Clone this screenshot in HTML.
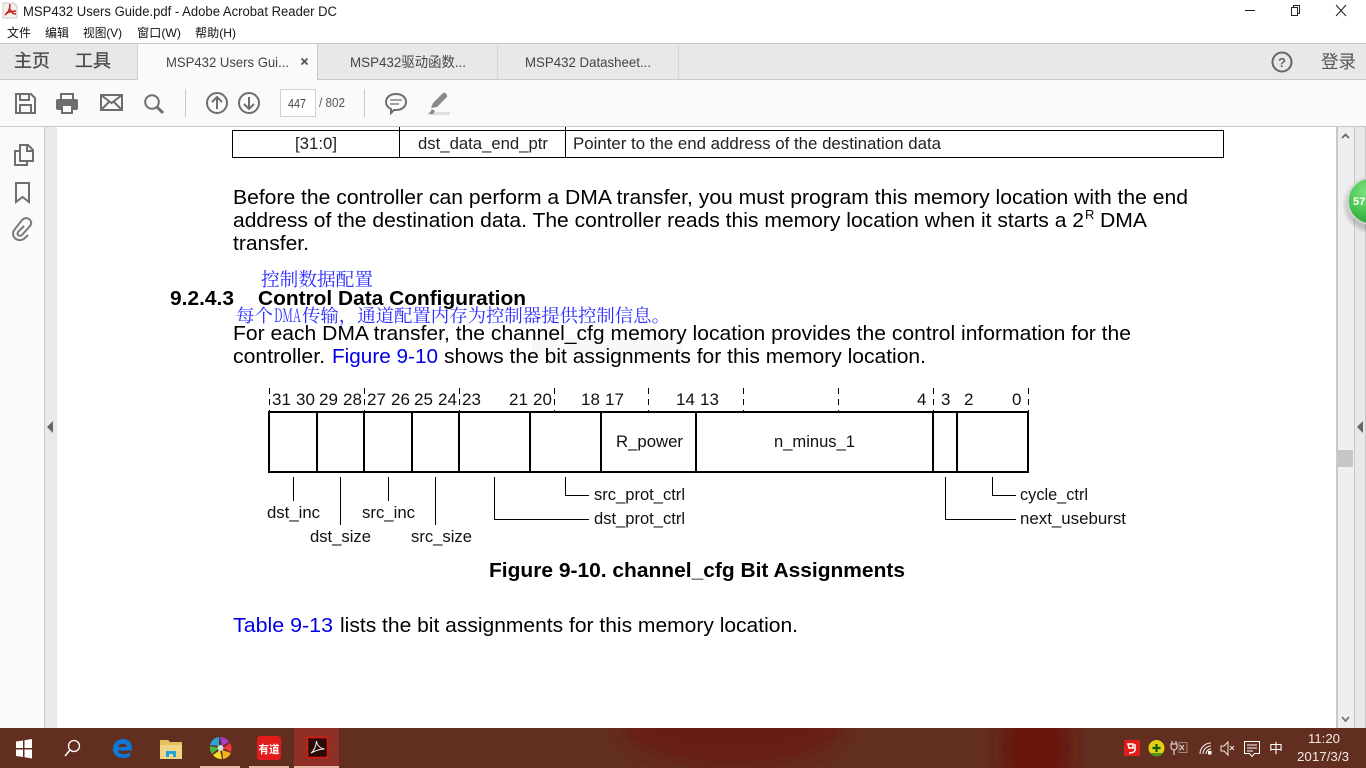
<!DOCTYPE html>
<html lang="zh"><head><meta charset="utf-8"><title>MSP432 Users Guide.pdf - Adobe Acrobat Reader DC</title>
<style>
html,body{margin:0;padding:0;width:1366px;height:768px;overflow:hidden;background:#fff}
svg{display:block}
text{font-family:"Liberation Sans","Noto Sans CJK SC",sans-serif;white-space:pre}
.p{font-size:20.6px;fill:#000}
.l{fill:#0000e6}
.n{font-size:17px;fill:#111}
.d{font-size:16.8px;fill:#111}
.cn{font-family:"Noto Serif CJK SC",serif;fill:#2c2cff}
.ui{fill:#444}
.ic{fill:none;stroke:#6e6e6e;stroke-width:2}
.tb{fill:#f3e9e5}
</style></head><body>
<svg width="1366" height="768" viewBox="0 0 1366 768" xmlns="http://www.w3.org/2000/svg">
<defs><filter id="b" x="-50%" y="-50%" width="200%" height="200%"><feGaussianBlur stdDeviation="9"/></filter>
<radialGradient id="ball" cx="40%" cy="30%" r="75%"><stop offset="0" stop-color="#7fe07f"/><stop offset=".6" stop-color="#45c44f"/><stop offset="1" stop-color="#2c9a38"/></radialGradient>
<radialGradient id="sh" cx="50%" cy="50%" r="50%"><stop offset=".8" stop-color="#000" stop-opacity=".18"/><stop offset="1" stop-color="#000" stop-opacity="0"/></radialGradient>
<clipPath id="tc"><rect x="0" y="728" width="1366" height="40"/></clipPath></defs>

<!-- title bar -->
<rect width="1366" height="43" fill="#fff"/>
<path d="M3 3h11l3 3v12H3z" fill="#f1f1f1" stroke="#ccc"/>
<path d="M5 15c3-2 5-6 5-11M10 9c1 3 3 5 6 5M6 13c3-1 6-2 10-2" fill="none" stroke="#c8201c" stroke-width="1.5"/>
<text x="23" y="16" font-size="13.500" fill="#1a1a1a" textLength="314" lengthAdjust="spacingAndGlyphs">MSP432 Users Guide.pdf - Adobe Acrobat Reader DC</text>
<text x="7" y="37" font-size="12" fill="#111" textLength="24" lengthAdjust="spacingAndGlyphs">文件</text>
<text x="45" y="37" font-size="12" fill="#111" textLength="24" lengthAdjust="spacingAndGlyphs">编辑</text>
<text x="83" y="37" font-size="12" fill="#111" textLength="39" lengthAdjust="spacingAndGlyphs">视图(V)</text>
<text x="137" y="37" font-size="12" fill="#111" textLength="44" lengthAdjust="spacingAndGlyphs">窗口(W)</text>
<text x="195" y="37" font-size="12" fill="#111" textLength="41" lengthAdjust="spacingAndGlyphs">帮助(H)</text>
<path d="M1245 10.500h10" stroke="#222" stroke-width="1"/>
<path d="M1291.500 7.500h6v8h-6zM1293.500 7V5.500h6v8H1298" fill="none" stroke="#222" stroke-width="1"/>
<path d="M1336 5l10 11M1346 5l-10 11" fill="none" stroke="#222" stroke-width="1"/>

<!-- tab bar -->
<rect y="43" width="1366" height="37" fill="#e8e8e8"/>
<rect y="43" width="1366" height="1" fill="#c9c9c9"/>
<rect y="79" width="1366" height="1" fill="#c9c9c9"/>
<rect x="138" y="44" width="179" height="36" fill="#fafafa"/>
<rect x="137" y="44" width="1" height="36" fill="#d0d0d0"/>
<rect x="317" y="44" width="1" height="36" fill="#c9c9c9"/>
<rect x="497" y="44" width="1" height="35" fill="#d6d6d6"/>
<rect x="678" y="44" width="1" height="35" fill="#d6d6d6"/>
<text x="14" y="67" font-size="18" fill="#4a4a4a" stroke="#4a4a4a" stroke-width=".3" textLength="36" lengthAdjust="spacingAndGlyphs">主页</text>
<text x="75" y="67" font-size="18" fill="#4a4a4a" stroke="#4a4a4a" stroke-width=".3" textLength="36" lengthAdjust="spacingAndGlyphs">工具</text>
<text x="166" y="67" font-size="14" class="ui" textLength="123" lengthAdjust="spacingAndGlyphs">MSP432 Users Gui...</text>
<path d="M301.500 58.500l6 6M307.500 58.500l-6 6" stroke="#555" stroke-width="1.800"/>
<text x="350" y="67" font-size="14" class="ui" textLength="116" lengthAdjust="spacingAndGlyphs">MSP432驱动函数...</text>
<text x="525" y="67" font-size="14" class="ui" textLength="126" lengthAdjust="spacingAndGlyphs">MSP432 Datasheet...</text>
<circle cx="1282" cy="62" r="9.500" fill="none" stroke="#666" stroke-width="2"/>
<text x="1282" y="67" font-size="13" font-weight="bold" fill="#666" text-anchor="middle">?</text>
<text x="1321" y="68" font-size="18" fill="#555" textLength="35" lengthAdjust="spacingAndGlyphs">登录</text>

<!-- toolbar -->
<rect y="80" width="1366" height="46" fill="#fafafa"/>
<rect y="126" width="1366" height="1" fill="#c9c9c9"/>
<path d="M16 94h15l4 4v15H16z" class="ic"/><path d="M20 94v6h9v-6M20 112v-7h11v7" class="ic"/>
<path d="M61 100v-6h12v6" class="ic" stroke-width="2"/><rect x="56" y="99" width="22" height="11" rx="2" fill="#6e6e6e"/><rect x="62" y="105" width="10" height="8" fill="#fafafa" stroke="#6e6e6e" stroke-width="2"/>
<path d="M101 95h21v15h-21zM101 95l10.500 8 10.500-8M101 110l8-8M122 110l-8-8" class="ic"/>
<circle cx="152" cy="102" r="6.800" class="ic" stroke-width="2"/><path d="M157 107l6 6" stroke="#6e6e6e" stroke-width="3"/>
<rect x="185" y="89" width="1" height="28" fill="#c9c9c9"/>
<circle cx="217" cy="103" r="10" class="ic"/><path d="M217 109V97M212 102l5-5 5 5" class="ic"/>
<circle cx="249" cy="103" r="10" class="ic"/><path d="M249 97v12M244 104l5 5 5-5" class="ic"/>
<rect x="280.500" y="89.500" width="35" height="27" fill="#fff" stroke="#d0d0d0"/>
<text x="288" y="108" font-size="13" fill="#444" textLength="18" lengthAdjust="spacingAndGlyphs">447</text>
<text x="319" y="107" font-size="13" fill="#555" textLength="26" lengthAdjust="spacingAndGlyphs">/ 802</text>
<rect x="364" y="89" width="1" height="28" fill="#c9c9c9"/>
<path d="M396 94c6 0 10 3.500 10 8s-4 8-10 8h-2l-3 3v-4c-3-1.500-5-4-5-7 0-4.500 4-8 10-8z" class="ic"/><path d="M390 100h12M390 104h9" stroke="#6e6e6e" stroke-width="1.300"/>
<path d="M431 108l2-5 10-10c2-1 5 2 4 4l-10 10z" fill="#8a8a8a"/><rect x="428" y="112" width="22" height="3" fill="#dedede"/><path d="M429 114l3-5 3 2-2 3z" fill="#8a8a8a"/>

<!-- left panel -->
<rect x="0" y="127" width="44" height="601" fill="#fafafa"/>
<rect x="44" y="127" width="1" height="601" fill="#c9c9c9"/>
<rect x="45" y="127" width="12" height="601" fill="#e9e9e9"/>
<path d="M20 151h-5v14h12v-4" class="ic"/><path d="M20 145h8l5 5v11H20zM27 145v6h6" class="ic"/>
<path d="M16 183h13v19l-6.500-5-6.500 5z" class="ic"/>
<path d="M24 226l-6 6c-2 3 2 5 4 3l8-9c4-5-3-11-8-6l-7 9c-6 7 3 15 10 9l3-3" fill="none" stroke="#7a7a7a" stroke-width="2"/>
<path d="M47 427l6-6v12z" fill="#666"/>

<!-- page -->
<rect x="57" y="127" width="1279" height="601" fill="#fff"/>
<rect x="532" y="338" width="150" height="14" fill="#f8f8f8"/>

<!-- table -->
<g stroke="#000" stroke-width="1" fill="none">
<path d="M232.500 130.500H1223.500V157.500H232.500Z"/>
<path d="M399.500 127V158M565.500 127V158"/>
</g>
<text x="295" y="149" font-size="16.800" fill="#222" textLength="42" lengthAdjust="spacingAndGlyphs">[31:0]</text>
<text x="418" y="149" font-size="16.800" fill="#222" textLength="130" lengthAdjust="spacingAndGlyphs">dst_data_end_ptr</text>
<text x="573" y="149" font-size="16.800" fill="#222" textLength="368" lengthAdjust="spacingAndGlyphs">Pointer to the end address of the destination data</text>

<!-- body -->
<text class="p" x="233" y="204" textLength="955" lengthAdjust="spacingAndGlyphs">Before the controller can perform a DMA transfer, you must program this memory location with the end</text>
<text class="p" x="233" y="227" textLength="851" lengthAdjust="spacingAndGlyphs">address of the destination data. The controller reads this memory location when it starts a 2</text>
<text x="1085" y="219" font-size="13" fill="#000">R</text>
<text class="p" x="1100" y="227" textLength="47" lengthAdjust="spacingAndGlyphs">DMA</text>
<text class="p" x="233" y="250" textLength="76" lengthAdjust="spacingAndGlyphs">transfer.</text>
<text class="cn" x="261" y="286" font-size="18.600" textLength="112" lengthAdjust="spacingAndGlyphs">控制数据配置</text>
<text x="170" y="305" font-size="20.600" font-weight="bold" fill="#000" textLength="64" lengthAdjust="spacingAndGlyphs">9.2.4.3</text>
<text x="258" y="305" font-size="20.600" font-weight="bold" fill="#000" textLength="268" lengthAdjust="spacingAndGlyphs">Control Data Configuration</text>
<text class="cn" x="236" y="322" font-size="18.400" textLength="37" lengthAdjust="spacingAndGlyphs">每个</text>
<text class="cn" x="274" y="322" font-size="18.400" textLength="27" lengthAdjust="spacingAndGlyphs">DMA</text>
<text class="cn" x="302" y="322" font-size="18.400" textLength="368" lengthAdjust="spacingAndGlyphs">传输，通道配置内存为控制器提供控制信息。</text>
<text class="p" x="233" y="340" textLength="898" lengthAdjust="spacingAndGlyphs">For each DMA transfer, the channel_cfg memory location provides the control information for the</text>
<text class="p" x="233" y="363" textLength="92" lengthAdjust="spacingAndGlyphs">controller.</text>
<text class="p l" x="332" y="363" textLength="106" lengthAdjust="spacingAndGlyphs">Figure 9-10</text>
<text class="p" x="444" y="363" textLength="482" lengthAdjust="spacingAndGlyphs">shows the bit assignments for this memory location.</text>

<!-- diagram -->
<g fill="none" stroke="#000">
<path d="M269 412H1028V472H269Z" stroke-width="2"/>
<path d="M317 412V472M364 412V472M412 412V472M459 412V472M530 412V472M601 412V472M696 412V472M933 412V472M957 412V472" stroke-width="2"/>
<path d="M269.500 388V412M364.500 388V412M459.500 388V412M554.500 388V412M648.500 388V412M743.500 388V412M838.500 388V412M933.500 388V412M1028.500 388V412" stroke-width="1" stroke-dasharray="6 5"/>
<path d="M293.500 477V501M340.500 477V525M388.500 477V501M435.500 477V525M494.500 477V519.500H589M565.500 477V495.500H589M945.500 477V519.500H1016M992.500 477V495.500H1016" stroke-width="1"/>
</g>
<g class="n">
<text x="272" y="405" class="n">31</text><text x="296" y="405" class="n">30</text><text x="319" y="405" class="n">29</text><text x="343" y="405" class="n">28</text><text x="367" y="405" class="n">27</text><text x="391" y="405" class="n">26</text><text x="414" y="405" class="n">25</text><text x="438" y="405" class="n">24</text><text x="462" y="405" class="n">23</text><text x="509" y="405" class="n">21</text><text x="533" y="405" class="n">20</text><text x="581" y="405" class="n">18</text><text x="605" y="405" class="n">17</text><text x="676" y="405" class="n">14</text><text x="700" y="405" class="n">13</text><text x="917" y="405" class="n">4</text><text x="941" y="405" class="n">3</text><text x="964" y="405" class="n">2</text><text x="1012" y="405" class="n">0</text>
</g>
<text class="d" x="616" y="447" textLength="67" lengthAdjust="spacingAndGlyphs">R_power</text>
<text class="d" x="774" y="447" textLength="81" lengthAdjust="spacingAndGlyphs">n_minus_1</text>
<text class="d" x="594" y="500" textLength="91" lengthAdjust="spacingAndGlyphs">src_prot_ctrl</text>
<text class="d" x="594" y="524" textLength="91" lengthAdjust="spacingAndGlyphs">dst_prot_ctrl</text>
<text class="d" x="1020" y="500" textLength="68" lengthAdjust="spacingAndGlyphs">cycle_ctrl</text>
<text class="d" x="1020" y="524" textLength="106" lengthAdjust="spacingAndGlyphs">next_useburst</text>
<text class="d" x="267" y="518" textLength="53" lengthAdjust="spacingAndGlyphs">dst_inc</text>
<text class="d" x="362" y="518" textLength="53" lengthAdjust="spacingAndGlyphs">src_inc</text>
<text class="d" x="310" y="542" textLength="61" lengthAdjust="spacingAndGlyphs">dst_size</text>
<text class="d" x="411" y="542" textLength="61" lengthAdjust="spacingAndGlyphs">src_size</text>
<text x="489" y="577" font-size="20.600" font-weight="bold" fill="#000" textLength="416" lengthAdjust="spacingAndGlyphs">Figure 9-10. channel_cfg Bit Assignments</text>
<text class="p l" x="233" y="632" textLength="100" lengthAdjust="spacingAndGlyphs">Table 9-13</text>
<text class="p" x="340" y="632" textLength="458" lengthAdjust="spacingAndGlyphs">lists the bit assignments for this memory location.</text>

<!-- right scrollbar -->
<rect x="1336" y="127" width="2" height="601" fill="#c9c9c9"/>
<rect x="1338" y="127" width="16" height="601" fill="#efefef"/>
<rect x="1354" y="127" width="1" height="601" fill="#c9c9c9"/>
<rect x="1355" y="127" width="10" height="601" fill="#e8e8e8"/>
<rect x="1365" y="127" width="1" height="601" fill="#c9c9c9"/>
<path d="M1342 138l3.500-3.500 3.500 3.500" fill="none" stroke="#666" stroke-width="1.800"/>
<path d="M1342 717l3.500 4 3.500-4" fill="none" stroke="#777" stroke-width="1.800"/>
<rect x="1338" y="450" width="15" height="17" fill="#c6c6c6"/>
<path d="M1357 427l6-6v12z" fill="#666"/>
<circle cx="1371" cy="205" r="29" fill="url(#sh)"/>
<circle cx="1371" cy="201" r="23" fill="url(#ball)" stroke="#d8d8d8" stroke-width="1.500"/>
<text x="1353" y="205" font-size="11" font-weight="bold" fill="#fff">57</text>

<!-- taskbar -->
<rect y="728" width="1366" height="40" fill="#622e20"/>
<g clip-path="url(#tc)"><g filter="url(#b)">
<ellipse cx="732" cy="722" rx="112" ry="44" fill="#691b14"/>
<ellipse cx="1036" cy="748" rx="36" ry="50" fill="#68190d"/>
</g></g>
<rect x="294" y="728" width="45" height="40" fill="#8e3026"/>
<rect x="200" y="766" width="40" height="2" fill="#e9b8ab"/>
<rect x="249" y="766" width="40" height="2" fill="#e9b8ab"/>
<rect x="294" y="766" width="45" height="2" fill="#e9b8ab"/>
<path d="M16 742.500l7-1v7.500h-7zM24.500 741.300l7.500-1.300v9h-7.500zM16 750.500h7v7.500l-7-1zM24.500 750.500H32v9l-7.500-1.300z" fill="#fff" transform="translate(0,-1)"/>
<circle cx="74" cy="746" r="5.500" fill="none" stroke="#fff" stroke-width="1.300"/><path d="M70 750l-5 6" stroke="#fff" stroke-width="1.500"/>
<path d="M113 749c0-6 4-10 10-10 5.500 0 9 3.500 9 9.500v2h-14c.5 3.500 6 5 12 2v4c-8 3.500-17 1-17-7.500zm5-2h9c0-4-8-4.500-9 0z" fill="#0f78d4"/>
<path d="M160 740h8l2 2h12v17h-22z" fill="#f0d585"/><path d="M160 740h8l2 2h12v3h-22z" fill="#e3bf5e"/><path d="M166 757v-6h10v6h-3v-3h-4v3z" fill="#1fa4dd"/>
<path d="M220 737a11 11 0 0 1 9 5l-7 4z" fill="#a83ccf"/><path d="M230 743a11 11 0 0 1 1 9l-8-4z" fill="#ef3b34"/><path d="M231 753a11 11 0 0 1-8 6l-1-9z" fill="#f6b21b"/><path d="M222 759a11 11 0 0 1-9-4l7-5z" fill="#f4dd2a"/><path d="M212 754a11 11 0 0 1-2-8l9 2z" fill="#48b948"/><path d="M210 745a11 11 0 0 1 9-8l0 9z" fill="#2aa6df"/>
<circle cx="220.500" cy="748" r="3" fill="#d8e0d8"/>
<rect x="257" y="736" width="24" height="24" rx="3" fill="#e21b1b"/>
<text x="269" y="753" font-size="11" font-weight="bold" fill="#fff" text-anchor="middle" textLength="21" lengthAdjust="spacingAndGlyphs">有道</text>
<rect x="307.500" y="737.500" width="20" height="20" fill="#2a0b08" stroke="#e0170f" stroke-width="1.500"/>
<path d="M311 753c3-2 5-7 5.500-12 .5 4 3 7 8 8-4 0-8 1-13.500 4z" fill="none" stroke="#f2f2f2" stroke-width="1"/>

<!-- tray -->
<rect x="1124" y="740" width="16" height="16" rx="2" fill="#e21b1b"/>
<path d="M1128 744h5v4h-4zM1135 744v6c0 2-3 3-6 3" fill="none" stroke="#fff" stroke-width="1.500"/>
<circle cx="1156.500" cy="748" r="8" fill="#e6cf10"/><path d="M1150 753a8 8 0 0 0 13 0z" fill="#4c9a1c"/>
<path d="M1156.500 744v8M1152.500 748h8" stroke="#0b5a12" stroke-width="2.200"/>
<path d="M1172 741v3M1176 741v3M1171 744h6v3c0 2-2 3-3 3s-3-1-3-3zM1174 750v5" fill="none" stroke="#f3e9e5" stroke-width="1"/>
<rect x="1179" y="742.500" width="8" height="10" fill="none" stroke="#9f8a82"/>
<path d="M1180 745l4 5M1184 745l-4 5" stroke="#f3e9e5"/>
<path d="M1200 754a11 11 0 0 1 11-11M1203 754a8 8 0 0 1 8-8M1206 754a5 5 0 0 1 5-5" fill="none" stroke="#f3e9e5" stroke-width="1.100"/><rect x="1208" y="751" width="3.500" height="3.500" fill="#fff"/>
<path d="M1221 746h3l4-4v13l-4-4h-3z" fill="none" stroke="#f3e9e5"/><path d="M1230 746l4 4M1234 746l-4 4" stroke="#f3e9e5"/>
<path d="M1244.500 741.500h15v12h-5l-2.500 3-2.500-3h-5z" fill="none" stroke="#fff"/><path d="M1247 745h10M1247 748h10M1247 751h6" stroke="#fff"/>
<text x="1269" y="753" font-size="13" fill="#fff" textLength="14" lengthAdjust="spacingAndGlyphs">中</text>
<text x="1308" y="743" font-size="13" class="tb" textLength="32" lengthAdjust="spacingAndGlyphs">11:20</text>
<text x="1297" y="761" font-size="13" class="tb" textLength="52" lengthAdjust="spacingAndGlyphs">2017/3/3</text>
</svg>
</body></html>
